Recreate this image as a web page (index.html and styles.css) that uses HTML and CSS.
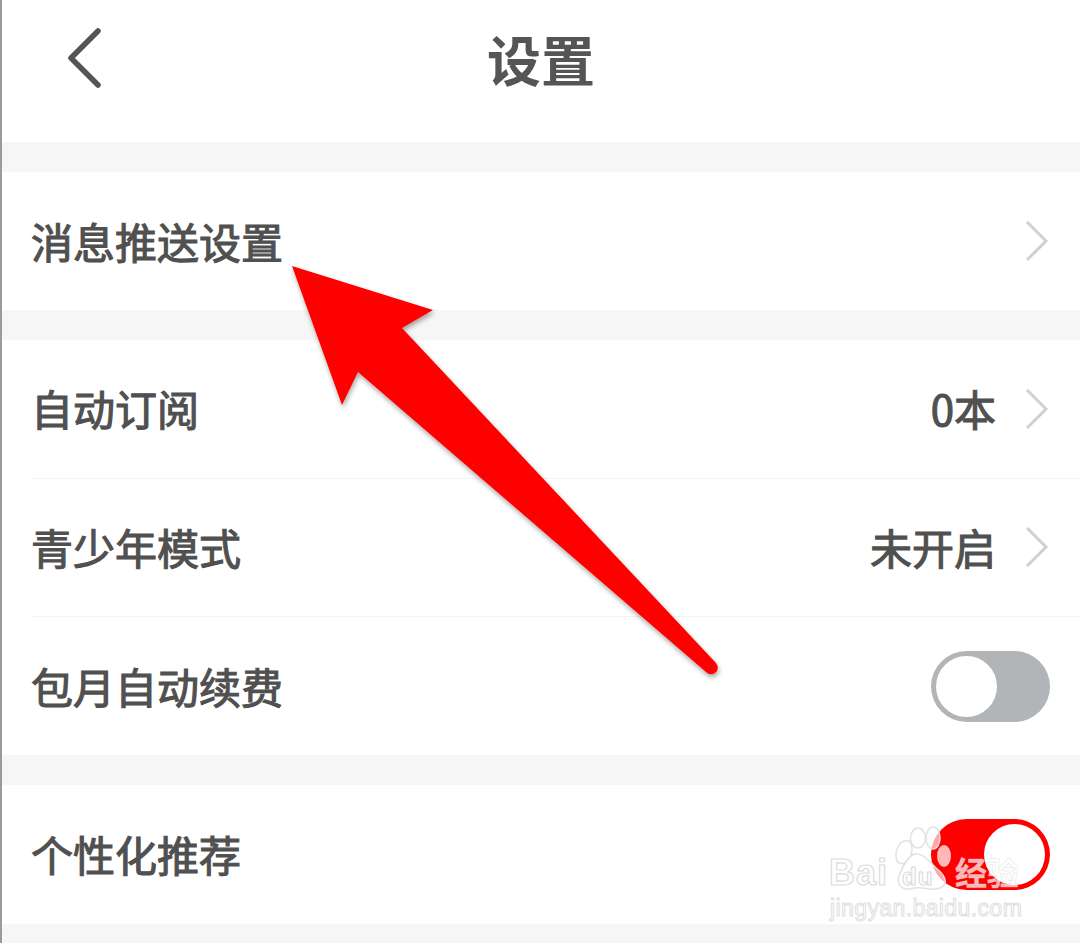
FILE: index.html
```html
<!DOCTYPE html>
<html lang="zh-CN">
<head>
  <meta charset="utf-8"/>
  <meta name="viewport" content="width=device-width, initial-scale=1.0"/>
  <title>设置</title>
  <link rel="stylesheet" href="styles.css">
</head>
<body>
  <div class="screen">
    <header class="topbar">
      <svg class="back" viewBox="0 0 36 62" width="36" height="62">
        <path d="M32 4 L5 31 L32 58" fill="none" stroke="#555" stroke-width="5.5" stroke-linecap="round" stroke-linejoin="round"/>
      </svg>
      <h1 class="title">设置</h1>
    </header>

    <section class="group">
      <div class="row">
        <span class="label">消息推送设置</span>
        <span class="right"><svg class="chev" viewBox="0 0 24 42" width="24" height="42"><path d="M2 2 L21 21 L2 40" fill="none" stroke="#d0d0d0" stroke-width="3"/></svg></span>
      </div>
    </section>

    <section class="group">
      <div class="row line">
        <span class="label">自动订阅</span>
        <span class="right"><span class="value">0本</span><svg class="chev" viewBox="0 0 24 42" width="24" height="42"><path d="M2 2 L21 21 L2 40" fill="none" stroke="#d0d0d0" stroke-width="3"/></svg></span>
      </div>
      <div class="row line">
        <span class="label">青少年模式</span>
        <span class="right"><span class="value">未开启</span><svg class="chev" viewBox="0 0 24 42" width="24" height="42"><path d="M2 2 L21 21 L2 40" fill="none" stroke="#d0d0d0" stroke-width="3"/></svg></span>
      </div>
      <div class="row">
        <span class="label">包月自动续费</span>
        <span class="right"><span class="toggle"><span class="knob"></span></span></span>
      </div>
    </section>

    <section class="group">
      <div class="row">
        <span class="label">个性化推荐</span>
        <span class="right"><span class="toggle on"><span class="knob"></span></span></span>
      </div>
    </section>

    <!-- red arrow drawn on top of the screenshot -->
    <svg class="arrow" viewBox="0 0 1080 943" width="1080" height="943">
      <defs>
        <filter id="shade" x="-10%" y="-10%" width="120%" height="120%">
          <feDropShadow dx="1" dy="3" stdDeviation="2.5" flood-color="#000" flood-opacity="0.35"/>
        </filter>
      </defs>
      <path filter="url(#shade)" fill="#fe0000" d="M292 266 L433 310 L402 328 L716 663 Q720 669 715 673 Q710 676 706 672 L358 372 L342 405 Z"/>
    </svg>

    <!-- baidu watermark -->
    <div class="mark">
      <svg class="paw" viewBox="0 0 130 70" width="130" height="70">
        <g fill="rgba(255,255,255,0.65)" stroke="#e2e2e2" stroke-width="1.5">
          <ellipse cx="26" cy="26" rx="7.5" ry="12" transform="rotate(20 26 26)"/>
          <ellipse cx="40" cy="12" rx="7.5" ry="10"/>
          <ellipse cx="55" cy="12" rx="7" ry="11"/>
          <path d="M36 28 C44 26 50 34 58 42 C66 48 72 58 62 62 C52 66 46 60 36 62 C24 66 18 58 21 50 C24 42 28 32 36 28 Z"/>
        </g>
        <ellipse cx="66" cy="30" rx="7" ry="11" fill="#fff" fill-opacity="0.72"/>
      </svg>
      <div class="mark-top"><span class="mark-en">Bai</span><span class="mark-du">du</span><span class="mark-cn">经验</span></div>
      <div class="mark-url">jingyan.baidu.com</div>
    </div>
  </div>
</body>
</html>
```

FILE: styles.css
```css
html, body {
  margin: 0;
  padding: 0;
}
body {
  background: #f6f6f6;
  font-family: "Noto Sans CJK SC", "Liberation Sans", sans-serif;
  color: #555;
}
.screen {
  position: relative;
  width: 1080px;
  height: 943px;
  overflow: hidden;
  box-sizing: border-box;
  border-left: 2px solid #9a9a9a;
}
.topbar {
  display: flex;
  align-items: center;
  justify-content: center;
  height: 142px;
  background: #fff;
  position: relative;
}
.back {
  position: absolute;
  left: 64px;
  top: 27px;
}
.title {
  margin: 0 0 24px;
  font-size: 54px;
  font-weight: 700;
  line-height: 1;
  color: #555;
}
.group {
  margin-top: 30px;
  background: #fff;
}
.row {
  display: flex;
  align-items: center;
  justify-content: space-between;
  height: 138.33px;
  box-sizing: border-box;
  margin-left: 30px;
  padding-right: 30px;
}
.line {
  border-bottom: 1px solid #f3f3f3;
}
.label, .value {
  position: relative;
  top: -1px;
  font-size: 42px;
  color: #505050;
  -webkit-text-stroke: 1.1px #505050;
}
.label {
  margin-left: -1px;
}
.right {
  display: flex;
  align-items: center;
  gap: 29px;
}
.chev {
  display: block;
  margin-right: 1px;
}
.toggle {
  display: block;
  width: 119px;
  height: 71px;
  box-sizing: border-box;
  padding: 5px;
  border-radius: 36px;
  background: #b1b5b7;
}
.knob {
  display: block;
  width: 61px;
  height: 61px;
  border-radius: 50%;
  background: #fff;
}
.toggle.on {
  background: #fe0000;
}
.toggle.on .knob {
  margin-left: 48px;
}
.arrow {
  position: absolute;
  left: -2px;
  top: 0;
}
.mark {
  position: absolute;
  left: 827px;
  top: 826px;
  width: 240px;
  height: 114px;
}
.paw {
  position: absolute;
  left: 49px;
  top: 0;
}
.mark-top {
  position: absolute;
  left: 0;
  top: 29px;
  width: 190px;
  height: 40px;
  display: flex;
  align-items: baseline;
  line-height: 1;
}
.mark-en, .mark-du {
  font-family: "Liberation Sans", sans-serif;
  font-weight: 700;
  color: #fff;
  -webkit-text-stroke: 1.2px #dcdcdc;
}
.mark-en {
  font-size: 36px;
  letter-spacing: 1px;
}
.mark-du {
  margin-left: 14px;
  font-size: 24px;
  letter-spacing: 1px;
  color: rgba(255, 255, 255, 0.5);
}
.mark-cn {
  margin-left: auto;
  font-size: 32px;
  font-weight: 700;
  color: rgba(255, 255, 255, 0.72);
  -webkit-text-stroke: 0.5px rgba(215, 215, 215, 0.7);
}
.mark-url {
  position: absolute;
  left: 1px;
  top: 69px;
  font-family: "Liberation Sans", sans-serif;
  font-size: 23px;
  line-height: 1.2;
  letter-spacing: 0.4px;
  color: #fff;
  -webkit-text-stroke: 1px #dedede;
}
```
